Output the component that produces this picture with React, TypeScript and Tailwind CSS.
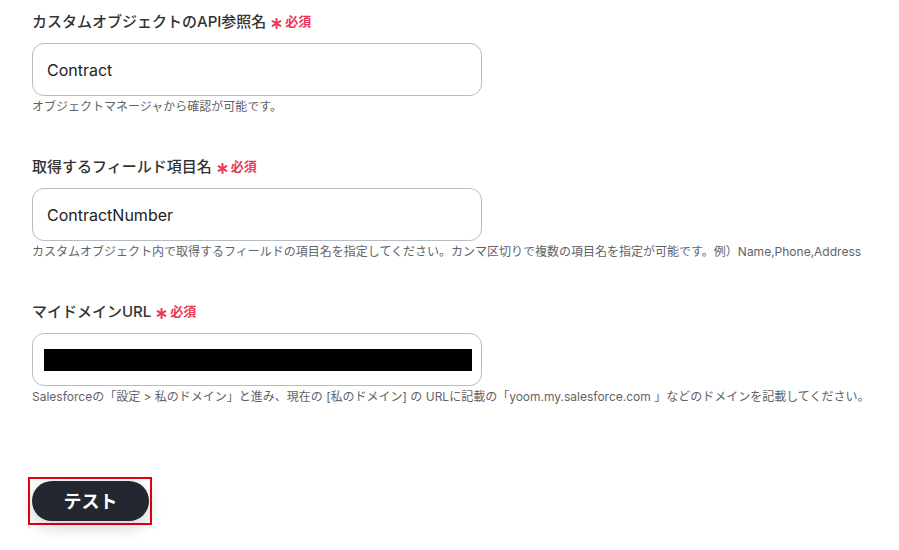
const Required = () => (
  <span className="ml-[5px] inline-flex items-center text-[13px] font-bold text-[#e8385a]">
    <svg width="11" height="11" viewBox="0 0 12 12" className="mt-[3px] mr-[3px]">
      <g stroke="currentColor" strokeWidth="2.2" strokeLinecap="round">
        <line x1="6" y1="1" x2="6" y2="11" />
        <line x1="1.7" y1="3.5" x2="10.3" y2="8.5" />
        <line x1="1.7" y1="8.5" x2="10.3" y2="3.5" />
      </g>
    </svg>
    必須
  </span>
);

function Field({
  label,
  children,
  help,
}: {
  label: string;
  children: React.ReactNode;
  help: string;
}) {
  return (
    <div>
      <label className="flex h-5 items-center text-[15px] font-medium text-[#333]">
        {label}
        <Required />
      </label>
      <div className="mt-[11px] flex h-[53px] w-[450px] items-center rounded-xl border border-[#b7bcc4] bg-white px-[14px] text-[16px] text-[#222]">
        {children}
      </div>
      <p className="mt-[3px] h-4 text-[12px] leading-4 whitespace-nowrap text-[#5f6368]">{help}</p>
    </div>
  );
}

export default function App() {
  return (
    <div
      className="h-[550px] w-[899px] bg-white pt-3 pl-8"
      style={{ fontFamily: 'Inter, "Noto Sans CJK JP", sans-serif' }}
    >
      <div className="flex flex-col gap-[42px]">
        <Field label="カスタムオブジェクトのAPI参照名" help="オブジェクトマネージャから確認が可能です。">
          Contract
        </Field>
        <Field
          label="取得するフィールド項目名"
          help="カスタムオブジェクト内で取得するフィールドの項目名を指定してください。カンマ区切りで複数の項目名を指定が可能です。例）Name,Phone,Address"
        >
          ContractNumber
        </Field>
        <Field
          label="マイドメインURL"
          help="Salesforceの「設定 > 私のドメイン」と進み、現在の [私のドメイン] の URLに記載の「yoom.my.salesforce.com 」などのドメインを記載してください。"
        >
          <div className="-ml-[3px] h-[22px] w-[428px] shrink-0 bg-black" />
        </Field>
      </div>
      <div className="mt-[72px] -ml-1 inline-block border-2 border-[#e60012] py-[2px] pr-px pl-[2px]">
        <button className="flex h-10 w-[117px] items-center justify-center rounded-full bg-[#23272f] text-[18px] font-bold text-white shadow-[0_6px_16px_rgba(0,0,0,0.18)]">
          テスト
        </button>
      </div>
    </div>
  );
}
